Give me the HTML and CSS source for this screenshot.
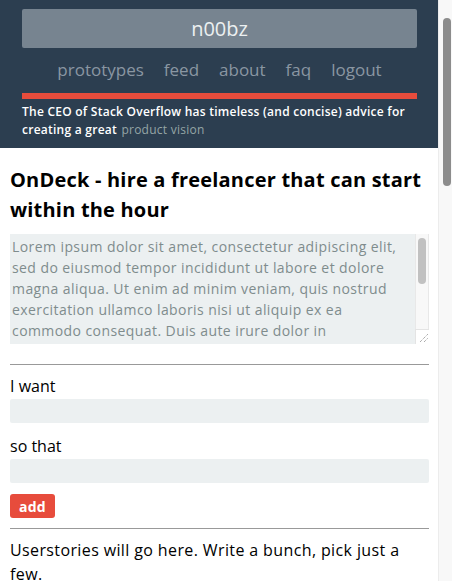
FILE: index.html
```html
<!DOCTYPE html>
<html lang="en">
<head>
<meta charset="utf-8">
<title>n00bz</title>
<link rel="stylesheet" href="styles.css">
</head>
<body>
<div class="page">
  <header class="site-header">
    <div class="brand">n00bz</div>
    <nav class="nav">
      <a href="#">prototypes</a>
      <a href="#">feed</a>
      <a href="#">about</a>
      <a href="#">faq</a>
      <a href="#">logout</a>
    </nav>
    <div class="accent-bar"></div>
    <p class="news">The CEO of Stack Overflow has timeless (and concise) advice for creating a great <a href="#">product vision</a></p>
  </header>
  <main class="content">
    <h1 class="title">OnDeck - hire a freelancer that can start within the hour</h1>
    <div class="desc-box">
      <textarea class="desc">Lorem ipsum dolor sit amet, consectetur adipiscing elit, sed do eiusmod tempor incididunt ut labore et dolore magna aliqua. Ut enim ad minim veniam, quis nostrud exercitation ullamco laboris nisi ut aliquip ex ea commodo consequat. Duis aute irure dolor in reprehenderit in voluptate velit esse cillum dolore eu fugiat nulla pariatur. Excepteur sint occaecat cupidatat non proident, sunt in culpa qui officia deserunt mollit anim id est laborum.</textarea>
      <div class="desc-scroll">
        <div class="desc-track"><div class="desc-thumb"></div></div>
        <div class="desc-corner">
          <svg width="14" height="14" viewBox="0 0 14 14"><path d="M4 12 L12 4 M8 12 L12 8" stroke="#888" stroke-width="1" stroke-dasharray="1 1" fill="none"/></svg>
        </div>
      </div>
    </div>
    <hr class="rule">
    <form class="story-form">
      <label class="field-label">I want</label>
      <input class="field" type="text">
      <label class="field-label">so that</label>
      <input class="field" type="text">
      <button class="add-btn" type="button">add</button>
    </form>
    <hr class="rule rule-tight">
    <p class="stories">Userstories will go here. Write a bunch, pick just a few.</p>
  </main>
</div>
<div class="page-scrollbar"><div class="page-thumb"></div></div>
</body>
</html>
```

FILE: styles.css
```css
html, body {
  margin: 0;
  padding: 0;
}
body {
  font-family: "Open Sans", "DejaVu Sans", sans-serif;
  color: #000;
  background: #fff;
  overflow: hidden;
}
.page {
  width: 438px;
  min-height: 1890px;
}
.page-scrollbar {
  position: fixed;
  top: 0;
  right: 0;
  width: 14px;
  height: 100vh;
  background: #f8f8f8;
  border-left: 1px solid #ececec;
  box-sizing: border-box;
}
.page-thumb {
  margin: 18px 0 0 4px;
  width: 8px;
  height: 168px;
  border-radius: 4px;
  background: #8c8c8c;
}
.site-header {
  background: #2c3e50;
  padding: 9px 21px 9px 22px;
}
.brand {
  background: #778490;
  color: #ecf0f1;
  border-radius: 2px;
  height: 39px;
  line-height: 39px;
  text-align: center;
  font-size: 20px;
  font-weight: 500;
}
.nav {
  display: flex;
  justify-content: center;
  gap: 20px;
  margin-top: 9px;
  line-height: 26px;
  font-size: 17px;
}
.nav a {
  color: #8a96a2;
  text-decoration: none;
  font-weight: 500;
}
.accent-bar {
  height: 6px;
  background: #e74c3c;
  margin-top: 10px;
}
.news {
  margin: 4px 0 0;
  color: #fff;
  font-size: 12px;
  line-height: 18px;
  font-weight: 600;
  letter-spacing: 0.25px;
}
.news a {
  color: #95a5a6;
  text-decoration: none;
  font-weight: 500;
  margin-left: 1px;
}
.content {
  padding: 0 9px 0 10px;
}
.title {
  margin: 17px 0 0;
  font-size: 20px;
  line-height: 30px;
  font-weight: 700;
  letter-spacing: 0.2px;
}
.desc-box {
  display: flex;
  height: 110px;
  margin-top: 9px;
}
.desc {
  flex: 1;
  box-sizing: border-box;
  height: 100%;
  margin: 0;
  padding: 2px;
  border: 0;
  background: #ecf0f1;
  color: #7f8c8d;
  font-family: inherit;
  font-size: 14px;
  line-height: 21px;
  letter-spacing: 0.42px;
  resize: none;
  overflow: hidden;
}
.desc-scroll {
  width: 14px;
  display: flex;
  flex-direction: column;
}
.desc-track {
  flex: 1;
  background: #f8f8f8;
  border-left: 1px solid #e8e8e8;
  border-right: 1px solid #e8e8e8;
  padding: 4px 0 0 2px;
}
.desc-thumb {
  width: 8px;
  height: 46px;
  border-radius: 4px;
  background: #c1c1c1;
}
.desc-corner {
  height: 15px;
  background: #fff;
  border-top: 1px solid #e4e4e4;
  border-left: 1px solid #e4e4e4;
  box-sizing: border-box;
}
.desc-corner svg {
  display: block;
}
.rule {
  border: 0;
  border-top: 1px solid #999;
  margin: 20px 0 0;
}
.story-form {
  display: flex;
  flex-direction: column;
  align-items: flex-start;
}
.field-label {
  font-size: 16px;
  line-height: 24px;
  margin-top: 9px;
}
.field-label + .field + .field-label {
  margin-top: 11px;
}
.field {
  box-sizing: border-box;
  width: 100%;
  height: 24px;
  margin: 1px 0 0;
  border: 0;
  border-radius: 2px;
  background: #ecf0f1;
  font-family: inherit;
}
.add-btn {
  margin-top: 11px;
  height: 24px;
  width: 45px;
  padding: 0;
  border: 0;
  border-radius: 3px;
  background: #e74c3c;
  color: #fff;
  font-family: inherit;
  font-weight: 700;
  font-size: 14px;
  letter-spacing: 0.3px;
}
.rule-tight {
  margin-top: 10px;
}
.stories {
  margin: 9px 0 0;
  font-size: 16px;
  line-height: 24px;
  letter-spacing: 0.38px;
}
```
